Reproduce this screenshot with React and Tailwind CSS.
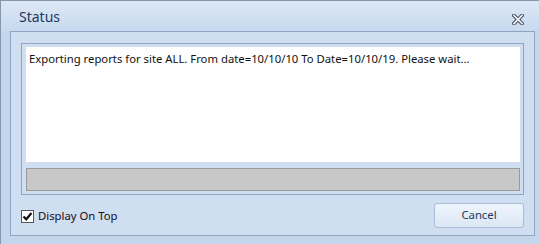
import React, { useState } from 'react';

const font = { fontFamily: '"Noto Sans", "Open Sans", Arial, sans-serif' };

// Office 2007 style close glyph: dark outline with a light fill
const CloseGlyph = () => (
  <svg width="12" height="11" viewBox="0 0 12 11" aria-hidden="true">
    <path d="M2 1.5 L10 9.5 M10 1.5 L2 9.5" stroke="#4a5566" strokeWidth="3.8" strokeLinecap="square" fill="none" />
    <path d="M2 1.5 L10 9.5 M10 1.5 L2 9.5" stroke="#f4f7fb" strokeWidth="1.6" strokeLinecap="square" fill="none" />
  </svg>
);

const App = () => {
  const [onTop, setOnTop] = useState(true);

  return (
    <div
      className="w-[539px] h-[244px] flex flex-col border-l border-t border-[#8797ad] bg-[#c4d6ec]"
      style={font}
    >
      {/* Title bar */}
      <div className="h-[30px] flex items-center justify-between pl-[18px] pr-[15px] bg-gradient-to-b from-[#dde8f5] to-[#c7d9ef]">
        <span className="text-[14px] leading-none text-[#1f3a5f] pt-[2px]">Status</span>
        <button className="flex items-center pt-[6px]" aria-label="Close">
          <CloseGlyph />
        </button>
      </div>

      {/* Content panel */}
      <div className="ml-[9px] mr-[4px] h-[205px] border border-[#8ea4bf] bg-[#cfdff1] flex flex-col px-[10px] pt-[11px]">
        <div className="h-[152px] border border-[#8ea4bf] flex flex-col pl-[4px] pr-[3px] pt-[3px] pb-[3px]">
          <div className="h-[115px] bg-white px-[3px] pt-[4px]">
            <p className="text-[11.3px] leading-[16px] text-[#111]">
              Exporting reports for site ALL. From date=10/10/10 To Date=10/10/19. Please wait...
            </p>
          </div>
          <div className="mt-[6px] h-[23px] border border-[#9a9a9a] bg-[#c9c8c9]" />
        </div>

        <div className="mt-[8px] flex items-center justify-between">
          <label className="flex items-center gap-[4px] cursor-pointer select-none pt-[1px]">
            <span
              onClick={() => setOnTop(v => !v)}
              className="w-[13px] h-[13px] border border-[#555] bg-white flex items-center justify-center"
            >
              {onTop && (
                <svg width="11" height="11" viewBox="0 0 11 11" aria-hidden="true">
                  <path d="M1.5 5.5 L4.2 8.3 L9.5 2" stroke="#111" strokeWidth="2.2" fill="none" />
                </svg>
              )}
            </span>
            <span className="text-[11.3px] text-[#1a0a1a]">Display On Top</span>
          </label>
          <button className="w-[90px] h-[25px] rounded-[3px] border border-[#a9bdd6] bg-gradient-to-b from-[#eef4fb] to-[#dce7f5] text-[11.3px] text-[#1e395b]">
            Cancel
          </button>
        </div>
      </div>
    </div>
  );
};

export default App;
